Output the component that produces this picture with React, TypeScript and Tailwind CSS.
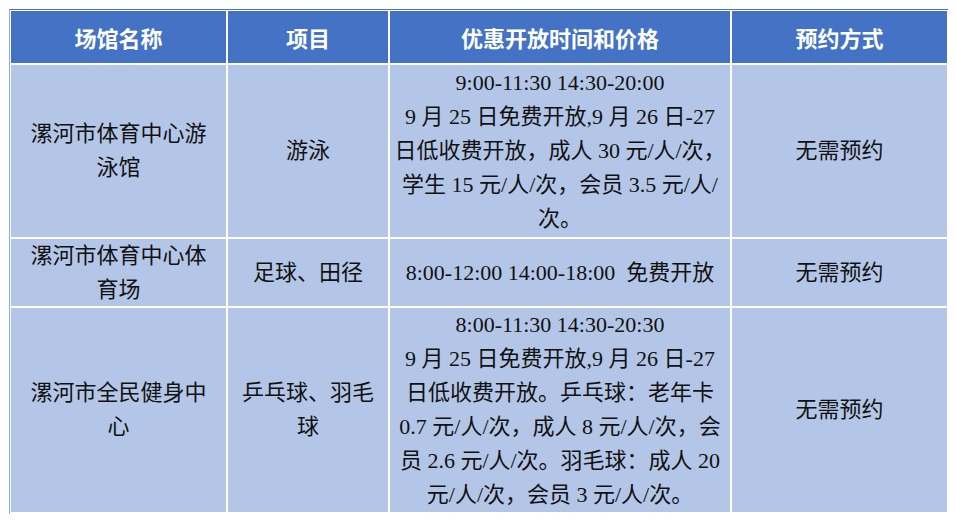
const rows: { name: string[]; item: string[]; detail: string[]; booking: string }[] = [
  {
    name: ["漯河市体育中心游", "泳馆"],
    item: ["游泳"],
    detail: [
      "9:00-11:30 14:30-20:00",
      "9 月 25 日免费开放,9 月 26 日-27",
      "日低收费开放，成人 30 元/人/次，",
      "学生 15 元/人/次，会员 3.5 元/人/",
      "次。",
    ],
    booking: "无需预约",
  },
  {
    name: ["漯河市体育中心体", "育场"],
    item: ["足球、田径"],
    detail: ["8:00-12:00 14:00-18:00  免费开放"],
    booking: "无需预约",
  },
  {
    name: ["漯河市全民健身中", "心"],
    item: ["乒乓球、羽毛", "球"],
    detail: [
      "8:00-11:30 14:30-20:30",
      "9 月 25 日免费开放,9 月 26 日-27",
      "日低收费开放。乒乓球：老年卡",
      "0.7 元/人/次，成人 8 元/人/次，会",
      "员 2.6 元/人/次。羽毛球：成人 20",
      "元/人/次，会员 3 元/人/次。",
    ],
    booking: "无需预约",
  },
];

const headers = ["场馆名称", "项目", "优惠开放时间和价格", "预约方式"];

function Lines({ lines }: { lines: string[] }) {
  return (
    <div className="text-center">
      {lines.map((l, i) => (
        <div key={i} className="whitespace-pre">
          {l}
        </div>
      ))}
    </div>
  );
}

export default function App() {
  return (
    <div
      className="min-h-screen bg-white pl-[9px] pt-[9px] text-[22px] leading-[34px] text-[#111]"
      style={{ fontFamily: '"Liberation Serif", "Noto Sans CJK SC", serif' }}
    >
      <div className="w-[939px] border-l border-t border-l-[#8faadc] border-t-[#4472c4] pb-[2px] pl-px pt-px">
        <div className="grid grid-cols-[215px_160px_340px_215px] grid-rows-[52px_172px_67px_204px] gap-[2px]">
          {headers.map((h) => (
            <div
              key={h}
              className="flex items-center justify-center bg-[#4472c4] font-bold text-white"
              style={{ fontFamily: '"Noto Sans CJK SC", sans-serif' }}
            >
              {h}
            </div>
          ))}
          {rows.map((r, i) => (
            <div key={i} className="contents">
              <div className="flex items-center justify-center bg-[#b4c6e7]">
                <Lines lines={r.name} />
              </div>
              <div className="flex items-center justify-center bg-[#b4c6e7]">
                <Lines lines={r.item} />
              </div>
              <div className="flex items-center justify-center bg-[#b4c6e7]">
                <Lines lines={r.detail} />
              </div>
              <div className="flex items-center justify-center bg-[#b4c6e7]">
                <Lines lines={[r.booking]} />
              </div>
            </div>
          ))}
        </div>
      </div>
    </div>
  );
}
